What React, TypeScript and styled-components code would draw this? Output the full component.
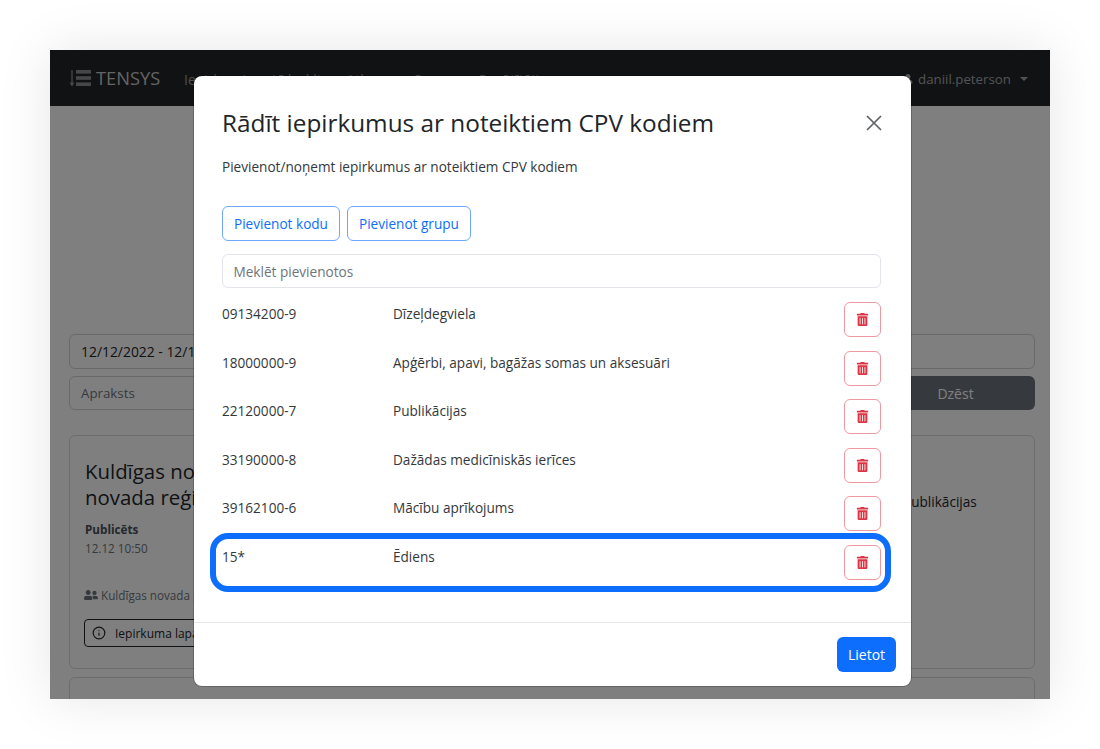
import React from 'react';
import styled, { createGlobalStyle } from 'styled-components';
import { FaTrashAlt, FaUser, FaUserFriends } from 'react-icons/fa';
import { FiInfo } from 'react-icons/fi';

const GlobalStyle = createGlobalStyle`
  html, body {
    margin: 0;
    padding: 0;
    background: #fff;
  }
  body {
    font-family: "Open Sans", "Noto Sans", "Liberation Sans", sans-serif;
    color: #212529;
  }
  * {
    box-sizing: border-box;
  }
`;

const codes = [
  { code: '09134200-9', name: 'Dīzeļdegviela' },
  { code: '18000000-9', name: 'Apģērbi, apavi, bagāžas somas un aksesuāri' },
  { code: '22120000-7', name: 'Publikācijas' },
  { code: '33190000-8', name: 'Dažādas medicīniskās ierīces' },
  { code: '39162100-6', name: 'Mācību aprīkojums' },
  { code: '15*', name: 'Ēdiens', highlighted: true },
];

const App = () => (
  <Page>
    <GlobalStyle />
    <Frame>
      <Navbar>
        <Brand>
          <BrandMark viewBox="0 0 21 16">
            <path d="M2 0v15M0.4 12.5L2 15.5l1.6-3" fill="none" stroke="#8f8f8f" strokeWidth="1.3" />
            <rect x="6" y="0" width="15" height="3.6" fill="#8f8f8f" />
            <rect x="6" y="6.2" width="15" height="3.6" fill="#8f8f8f" />
            <rect x="6" y="12.4" width="15" height="3.6" fill="#8f8f8f" />
          </BrandMark>
          TENSYS
        </Brand>
        <NavLinks>
          <NavLink>Iepirkumi</NavLink>
          <NavLink>Līdzekļi</NavLink>
          <NavLink>Atlase</NavLink>
          <NavLink>Grupa</NavLink>
          <NavLink>Pasūtītāji</NavLink>
        </NavLinks>
        <UserMenu>
          <FaUser size={10} />
          daniil.peterson
          <Caret />
        </UserMenu>
      </Navbar>
      <Content>
        <DateInput>12/12/2022 - 12/19/2022</DateInput>
        <FilterRow>
          <FilterInput>Apraksts</FilterInput>
          <ClearButton>Dzēst</ClearButton>
        </FilterRow>
        <CardList>
          <Card>
            <CardMain>
              <CardTitle>Kuldīgas novada pašvaldība novada reģistrs</CardTitle>
              <MetaLabel>Publicēts</MetaLabel>
              <MetaValue>12.12 10:50</MetaValue>
              <Buyer>
                <FaUserFriends size={14} />
                Kuldīgas novada pašvaldība
              </Buyer>
              <CardLink>
                <FiInfo size={14} />
                Iepirkuma lapa
              </CardLink>
            </CardMain>
            <CardSide>Publikācijas</CardSide>
          </Card>
          <Card />
        </CardList>
      </Content>
      <Backdrop />
      <Modal>
        <ModalHeader>
          <ModalTitle>Rādīt iepirkumus ar noteiktiem CPV kodiem</ModalTitle>
          <CloseIcon viewBox="0 0 16 16">
            <path d="M1 1l14 14M15 1L1 15" stroke="#5f6265" strokeWidth="1.7" fill="none" />
          </CloseIcon>
        </ModalHeader>
        <ModalBody>
          <Lead>Pievienot/noņemt iepirkumus ar noteiktiem CPV kodiem</Lead>
          <ButtonRow>
            <OutlineButton>Pievienot kodu</OutlineButton>
            <OutlineButton>Pievienot grupu</OutlineButton>
          </ButtonRow>
          <SearchBox>Meklēt pievienotos</SearchBox>
          <CodeList>
            {codes.map((item) => (
              <CodeRow key={item.code} $highlighted={item.highlighted}>
                <Code>{item.code}</Code>
                <CodeName>{item.name}</CodeName>
                <DeleteButton>
                  <FaTrashAlt size={13} />
                </DeleteButton>
              </CodeRow>
            ))}
          </CodeList>
        </ModalBody>
        <ModalFooter>
          <ApplyButton>Lietot</ApplyButton>
        </ModalFooter>
      </Modal>
    </Frame>
  </Page>
);

export default App;

const Page = styled.div`
  width: 1100px;
  height: 749px;
  padding: 50px;
  overflow: hidden;
`;

const Frame = styled.div`
  position: relative;
  width: 1000px;
  height: 649px;
  overflow: hidden;
  background: #fff;
  box-shadow: 0 0 50px rgba(0, 0, 0, 0.1);
`;

const Navbar = styled.div`
  display: flex;
  align-items: center;
  height: 56px;
  padding: 0 22px 0 20px;
  background: #212529;
  color: #a6a8aa;
  font-size: 13.3px;
  border-bottom: 1px solid #212529;
`;

const Brand = styled.div`
  display: flex;
  align-items: center;
  gap: 5px;
  width: 114px;
  color: #c8c8c8;
  font-size: 18.3px;
`;

const BrandMark = styled.svg`
  width: 21px;
  height: 16px;
`;

const NavLinks = styled.div`
  display: flex;
  gap: 26px;
  padding-top: 4px;
`;

const NavLink = styled.span`
  color: #9a9da0;
  font-size: 14px;
`;

const UserMenu = styled.div`
  display: flex;
  align-items: center;
  gap: 5px;
  margin-left: auto;
  padding-top: 2px;
`;

const Caret = styled.span`
  margin-left: 4px;
  border-top: 4.5px solid currentColor;
  border-left: 4.5px solid transparent;
  border-right: 4.5px solid transparent;
`;

const Content = styled.div`
  padding: 228px 15px 0 19px;
  font-size: 13.6px;
`;

const DateInput = styled.div`
  display: flex;
  align-items: center;
  height: 35px;
  padding: 0 11px;
  border: 1px solid #ced4da;
  border-radius: 6px;
  font-size: 13.9px;
`;

const FilterRow = styled.div`
  display: flex;
  gap: 8px;
  margin-top: 7px;
`;

const FilterInput = styled(DateInput)`
  flex: 1;
  height: 34px;
  color: #6c757d;
  font-size: 13.3px;
`;

const ClearButton = styled.div`
  display: flex;
  align-items: center;
  justify-content: center;
  width: 159px;
  height: 34px;
  border-radius: 6px;
  background: #6c757d;
  color: #fff;
  font-size: 14px;
`;

const CardList = styled.div`
  display: flex;
  flex-direction: column;
  gap: 8px;
  margin-top: 25px;
`;

const Card = styled.div`
  display: flex;
  flex: none;
  height: 234px;
  padding: 22px 15px;
  border: 1px solid #d8d9da;
  border-radius: 6px;
`;

const CardMain = styled.div`
  flex: 1;
`;

const CardTitle = styled.div`
  width: 300px;
  font-size: 20.4px;
  font-weight: 500;
  line-height: 26px;
`;

const MetaLabel = styled.div`
  margin-top: 11px;
  color: #495057;
  font-size: 11.7px;
  font-weight: 700;
`;

const MetaValue = styled.div`
  margin-top: 3px;
  color: #6c757d;
  font-size: 11.7px;
`;

const Buyer = styled.div`
  display: flex;
  align-items: center;
  gap: 3px;
  margin-top: 31px;
  margin-left: -1px;
  color: #6c757d;
  font-size: 11.7px;
`;

const CardLink = styled.div`
  display: inline-flex;
  align-items: center;
  gap: 9px;
  height: 28px;
  margin-top: 16px;
  margin-left: -1px;
  padding: 0 12px 0 7px;
  border: 1px solid #212529;
  border-radius: 4px;
  font-size: 12px;
`;

const CardSide = styled.div`
  padding-top: 34px;
  width: 116px;
`;

const Backdrop = styled.div`
  position: absolute;
  inset: 0;
  background: rgba(0, 0, 0, 0.5);
`;

const Modal = styled.div`
  position: absolute;
  top: 26px;
  left: 144px;
  display: flex;
  flex-direction: column;
  width: 717px;
  height: 610px;
  border-radius: 8px;
  background: #fff;
  box-shadow: 0 0 0 1px rgba(0, 0, 0, 0.2);
`;

const ModalHeader = styled.div`
  display: flex;
  align-items: center;
  justify-content: space-between;
  padding: 31px 29px 0 28px;
`;

const ModalTitle = styled.h5`
  margin: 0;
  font-size: 24.35px;
  font-weight: 500;
  line-height: 32px;
`;

const CloseIcon = styled.svg`
  width: 16px;
  height: 16px;
`;

const ModalBody = styled.div`
  flex: 1;
  padding: 0 30px 0 28px;
  color: #33383c;
  font-size: 13.6px;
`;

const Lead = styled.p`
  margin: 17px 0 0;
  line-height: 22px;
`;

const ButtonRow = styled.div`
  display: flex;
  gap: 6.5px;
  margin-top: 28px;
`;

const OutlineButton = styled.div`
  display: flex;
  align-items: center;
  height: 35px;
  padding: 0 11.5px 0 11px;
  border: 1.5px solid #6ea8fe;
  border-radius: 6px;
  color: #0d6efd;
`;

const SearchBox = styled.div`
  display: flex;
  align-items: center;
  height: 34px;
  margin-top: 13px;
  padding: 1px 10.5px 0;
  border: 1.5px solid #e1e4e8;
  border-radius: 6px;
  color: #6c757d;
`;

const CodeList = styled.div`
  margin-top: 14px;
`;

const CodeRow = styled.div<{ $highlighted?: boolean }>`
  position: relative;
  display: flex;
  height: 35px;
  margin-bottom: 13.6px;
  line-height: 24px;

  ${({ $highlighted }) =>
    $highlighted &&
    `
    &::after {
      content: '';
      position: absolute;
      inset: -12px -10px -12px -12.5px;
      border: 6px solid #0d6efd;
      border-radius: 18px;
      pointer-events: none;
    }
  `}
`;

const Code = styled.div`
  width: 171px;
`;

const CodeName = styled.div`
  flex: 1;
`;

const DeleteButton = styled.div`
  display: flex;
  align-items: center;
  justify-content: center;
  width: 37.5px;
  height: 35px;
  border: 1.5px solid #ee98a1;
  border-radius: 6px;
  color: #dc3545;
`;

const ModalFooter = styled.div`
  display: flex;
  justify-content: flex-end;
  height: 64px;
  padding: 14px 15px 0 0;
  border-top: 1px solid #e4e6e9;
`;

const ApplyButton = styled.div`
  display: flex;
  align-items: center;
  justify-content: center;
  width: 59px;
  height: 35px;
  border-radius: 6px;
  background: #0d6efd;
  color: #fff;
  font-size: 14px;
`;
